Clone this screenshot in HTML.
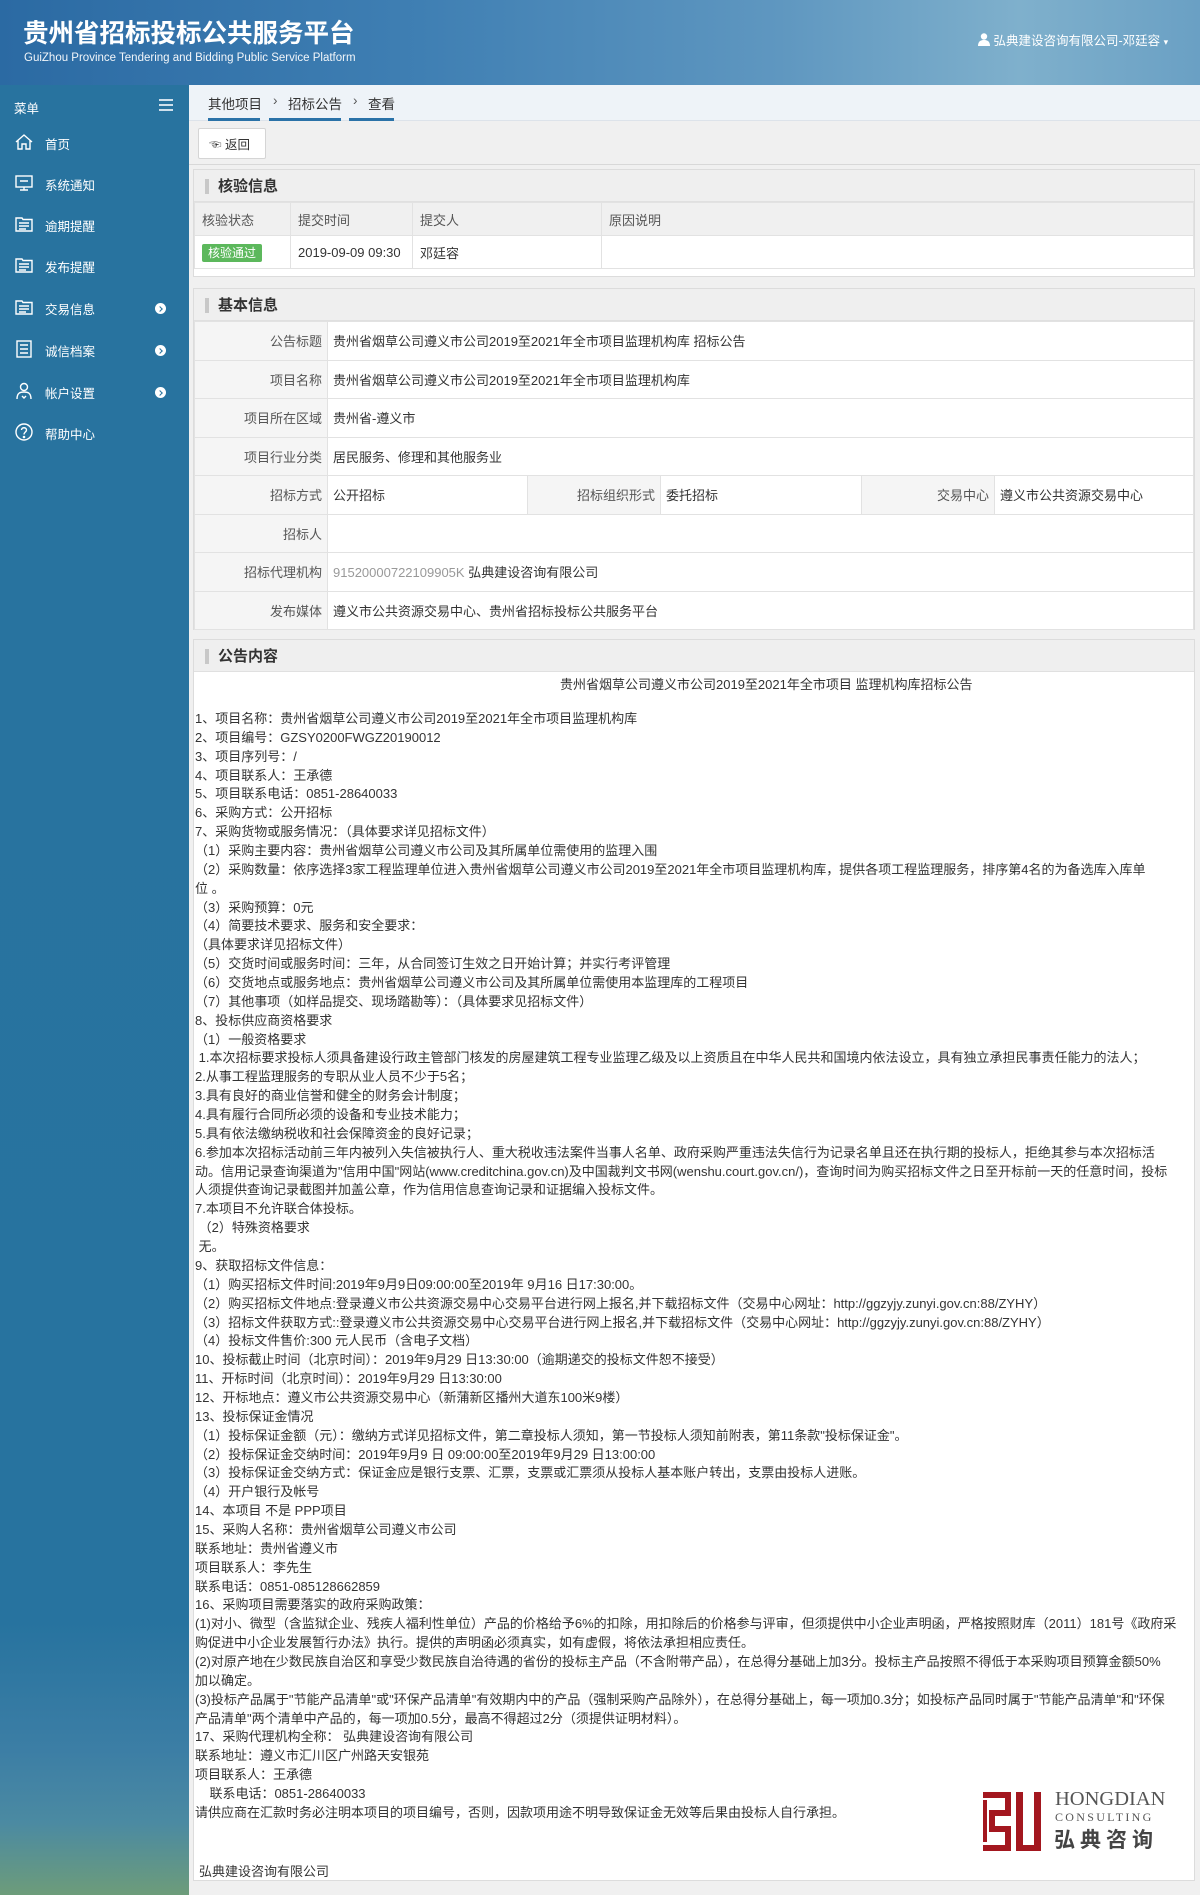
<!DOCTYPE html>
<html><head><meta charset="utf-8">
<style>
*{margin:0;padding:0;box-sizing:border-box}
body{width:1200px;height:1895px;position:relative;background:#f0f0f0;font-family:"Liberation Sans","Noto Sans CJK SC",sans-serif;color:#333;font-size:13px;overflow:hidden}
.abs{position:absolute}
#hdr{left:0;top:0;width:1200px;height:85px;background:linear-gradient(90deg,#2b6aa3 0%,#3f7fb3 35%,#5f97c0 65%,#7fb0cc 85%,#6aa0c4 100%);box-shadow:0 2px 4px rgba(0,0,0,.35)}
#hdr .t1{left:23px;top:15px;font-size:25.5px;font-weight:bold;color:#fff;font-family:"Noto Sans CJK SC",sans-serif;white-space:nowrap;line-height:34px}
#hdr .t2{left:24px;top:52px;font-size:11.5px;color:#f2f6fa;white-space:nowrap}
#hdr .user{left:978px;top:30px;color:#fff;font-size:12.5px;white-space:nowrap}
#side{left:0;top:85px;width:189px;height:1810px;background:linear-gradient(180deg,#28739f 0%,#27739f 85%,#3c7ea5 92%,#4b8aa2 96%,#6d9c7a 100%)}
.mi{position:absolute;left:0;width:189px;height:30px;color:#fff;font-size:12.5px}
.mi span{position:absolute;left:45px;top:6px}
.mi svg{position:absolute;left:14px;top:4px}
.mi .ch{position:absolute;left:155px;top:10px;width:11px;height:11px;border-radius:50%;background:#fff}
.mi .ch:after{content:"";position:absolute;left:3px;top:3.5px;width:3px;height:3px;border-right:1.5px solid #27739f;border-top:1.5px solid #27739f;transform:rotate(45deg)}
#bc{left:189px;top:85px;width:1011px;height:36px;background:#eef3f8;border-bottom:1px solid #dde3ea}
.bct{position:absolute;top:8px;font-size:13.5px;color:#333}
.bcu{position:absolute;top:33px;height:3px;background:#2a72a8}
.box{position:absolute;left:193px;width:1002px;background:#fff;border:1px solid #dcdcdc}
.bh{height:32px;background:#efefef;border-bottom:1px solid #e0e0e0;position:relative}
.bh b{position:absolute;left:24px;top:5px;font-size:15px;font-family:"Noto Sans CJK SC",sans-serif}
.bh i{position:absolute;left:11px;top:9px;width:4px;height:15px;background:#c8c8c8}
table{border-collapse:collapse}
td{border:1px solid #e2e2e2;font-size:13px}
.lab{background:#f5f5f5;text-align:right;padding-right:5px;color:#555}
.val{padding-left:5px}
#ct{position:absolute;left:195px;top:710px;width:1000px;line-height:18.86px;font-size:13px;color:#333;white-space:pre-wrap}
</style></head><body>
<div id="hdr" class="abs">
<div class="abs t1">贵州省招标投标公共服务平台</div>
<div class="abs t2">GuiZhou Province Tendering and Bidding Public Service Platform</div>
<div class="abs user"><svg width="12" height="13" viewBox="0 0 12 13" style="vertical-align:-1px"><circle cx="6" cy="3.5" r="3.2" fill="#fff"/><path d="M0 13 C0 8 3 7 6 7 C9 7 12 8 12 13Z" fill="#fff"/></svg> 弘典建设咨询有限公司-邓廷容 <span style="font-size:9px">▾</span></div>
</div>
<div id="side" class="abs">
<div class="abs" style="left:14px;top:13px;color:#fff;font-size:12.5px">菜单</div>
<div class="abs" style="left:159px;top:14px;width:14px;height:2px;background:#cfe0ec;box-shadow:0 5px 0 #cfe0ec,0 10px 0 #cfe0ec"></div>
<div class="mi" style="top:43px"><svg width="20" height="20" viewBox="0 0 20 20" fill="none" stroke="#fff" stroke-width="1.4"><path d="M2 10 L10 3 L18 10 M4 8.5 V17 H8 V12 H12 V17 H16 V8.5"/></svg><span>首页</span></div>
<div class="mi" style="top:84px"><svg width="20" height="20" viewBox="0 0 20 20" fill="none" stroke="#fff" stroke-width="1.4"><rect x="2" y="3" width="16" height="11"/><path d="M10 14 V17 M6 17 H14 M6 8 H14"/></svg><span>系统通知</span></div>
<div class="mi" style="top:125px"><svg width="20" height="20" viewBox="0 0 20 20" fill="none" stroke="#fff" stroke-width="1.4"><path d="M2 4 H8 L9 5.5 H18 V17 H2Z M5 9 H15 M5 12 H15 M5 15 H12"/></svg><span>逾期提醒</span></div>
<div class="mi" style="top:166px"><svg width="20" height="20" viewBox="0 0 20 20" fill="none" stroke="#fff" stroke-width="1.4"><path d="M2 4 H8 L9 5.5 H18 V17 H2Z M5 9 H15 M5 12 H15 M5 15 H12"/></svg><span>发布提醒</span></div>
<div class="mi" style="top:208px"><svg width="20" height="20" viewBox="0 0 20 20" fill="none" stroke="#fff" stroke-width="1.4"><path d="M2 4 H8 L9 5.5 H18 V17 H2Z M5 9 H15 M5 12 H15 M5 15 H12"/></svg><span>交易信息</span><div class="ch"></div></div>
<div class="mi" style="top:250px"><svg width="20" height="20" viewBox="0 0 20 20" fill="none" stroke="#fff" stroke-width="1.4"><rect x="3" y="2" width="14" height="16"/><path d="M6 6 H14 M6 10 H14 M6 14 H14"/></svg><span>诚信档案</span><div class="ch"></div></div>
<div class="mi" style="top:292px"><svg width="20" height="20" viewBox="0 0 20 20" fill="none" stroke="#fff" stroke-width="1.4"><circle cx="10" cy="6" r="3.5"/><path d="M3 18 C3 12 6 11 10 11 C14 11 17 12 17 18 M8 15 L10 17 L12 15"/></svg><span>帐户设置</span><div class="ch"></div></div>
<div class="mi" style="top:333px"><svg width="20" height="20" viewBox="0 0 20 20" fill="none" stroke="#fff" stroke-width="1.4"><circle cx="10" cy="10" r="8"/><path d="M7.5 8 C7.5 5 12.5 5 12.5 8 C12.5 10 10 10 10 12.5"/><circle cx="10" cy="15" r=".6" fill="#fff"/></svg><span>帮助中心</span></div>
</div>
<div id="bc" class="abs">
<div class="bct" style="left:19px">其他项目</div>
<div class="bct" style="left:84px;color:#555">›</div>
<div class="bct" style="left:99px">招标公告</div>
<div class="bct" style="left:164px;color:#555">›</div>
<div class="bct" style="left:179px">查看</div>
<div class="bcu" style="left:19px;width:52px"></div>
<div class="bcu" style="left:80px;width:72px"></div>
<div class="bcu" style="left:160px;width:45px"></div>
</div>
<div class="abs" style="left:198px;top:128px;width:68px;height:31px;background:#fff;border:1px solid #d5d5d5;border-radius:2px;font-size:12.5px;padding:5px 0 0 10px">☜ 返回</div>
<div class="abs" style="left:189px;top:164px;width:1011px;height:1px;background:#d8d8d8"></div>

<div class="box" style="top:169px;height:108px">
<div class="bh"><i></i><b>核验信息</b></div>
<table style="width:1000px">
<tr style="height:33px;background:#f0f0f0"><td style="width:96px;padding-left:7px;color:#555">核验状态</td><td style="width:122px;padding-left:7px;color:#555">提交时间</td><td style="width:189px;padding-left:7px;color:#555">提交人</td><td style="padding-left:7px;color:#555">原因说明</td></tr>
<tr style="height:33px"><td style="padding-left:7px"><span style="background:#5cb85c;color:#fff;padding:2px 6px;font-size:12px;border-radius:2px">核验通过</span></td><td style="padding-left:7px">2019-09-09 09:30</td><td style="padding-left:7px">邓廷容</td><td></td></tr>
</table>
</div>

<div class="box" style="top:288px;height:342px">
<div class="bh"><i></i><b>基本信息</b></div>
<table style="width:1000px">
<tr style="height:38.5px"><td class="lab" style="width:133px">公告标题</td><td class="val" colspan="5">贵州省烟草公司遵义市公司2019至2021年全市项目监理机构库 招标公告</td></tr>
<tr style="height:38.5px"><td class="lab">项目名称</td><td class="val" colspan="5">贵州省烟草公司遵义市公司2019至2021年全市项目监理机构库</td></tr>
<tr style="height:38.5px"><td class="lab">项目所在区域</td><td class="val" colspan="5">贵州省-遵义市</td></tr>
<tr style="height:38.5px"><td class="lab">项目行业分类</td><td class="val" colspan="5">居民服务、修理和其他服务业</td></tr>
<tr style="height:38.5px"><td class="lab">招标方式</td><td class="val" style="width:200px">公开招标</td><td class="lab" style="width:133px">招标组织形式</td><td class="val" style="width:201px">委托招标</td><td class="lab" style="width:133px">交易中心</td><td class="val">遵义市公共资源交易中心</td></tr>
<tr style="height:38.5px"><td class="lab">招标人</td><td class="val" colspan="5"></td></tr>
<tr style="height:38.5px"><td class="lab">招标代理机构</td><td class="val" colspan="5"><span style="color:#999">91520000722109905K</span> 弘典建设咨询有限公司</td></tr>
<tr style="height:38.5px"><td class="lab">发布媒体</td><td class="val" colspan="5">遵义市公共资源交易中心、贵州省招标投标公共服务平台</td></tr>
</table>
</div>

<div class="box" style="top:639px;height:1242px">
<div class="bh"><i></i><b>公告内容</b></div>
</div>
<div class="abs" style="left:560px;top:674px;font-size:13px;white-space:nowrap">贵州省烟草公司遵义市公司2019至2021年全市项目 监理机构库招标公告</div>
<div id="ct">1、项目名称：贵州省烟草公司遵义市公司2019至2021年全市项目监理机构库
2、项目编号：GZSY0200FWGZ20190012
3、项目序列号：/
4、项目联系人：王承德
5、项目联系电话：0851-28640033
6、采购方式：公开招标
7、采购货物或服务情况：（具体要求详见招标文件）
（1）采购主要内容：贵州省烟草公司遵义市公司及其所属单位需使用的监理入围
（2）采购数量：依序选择3家工程监理单位进入贵州省烟草公司遵义市公司2019至2021年全市项目监理机构库，提供各项工程监理服务，排序第4名的为备选库入库单
位 。
（3）采购预算：0元
（4）简要技术要求、服务和安全要求：
（具体要求详见招标文件）
（5）交货时间或服务时间：三年，从合同签订生效之日开始计算；并实行考评管理
（6）交货地点或服务地点：贵州省烟草公司遵义市公司及其所属单位需使用本监理库的工程项目
（7）其他事项（如样品提交、现场踏勘等）：（具体要求见招标文件）
8、投标供应商资格要求
（1）一般资格要求
 1.本次招标要求投标人须具备建设行政主管部门核发的房屋建筑工程专业监理乙级及以上资质且在中华人民共和国境内依法设立，具有独立承担民事责任能力的法人；
2.从事工程监理服务的专职从业人员不少于5名；
3.具有良好的商业信誉和健全的财务会计制度；
4.具有履行合同所必须的设备和专业技术能力；
5.具有依法缴纳税收和社会保障资金的良好记录；
6.参加本次招标活动前三年内被列入失信被执行人、重大税收违法案件当事人名单、政府采购严重违法失信行为记录名单且还在执行期的投标人，拒绝其参与本次招标活
动。信用记录查询渠道为"信用中国"网站(www.creditchina.gov.cn)及中国裁判文书网(wenshu.court.gov.cn/)，查询时间为购买招标文件之日至开标前一天的任意时间，投标
人须提供查询记录截图并加盖公章，作为信用信息查询记录和证据编入投标文件。
7.本项目不允许联合体投标。
 （2）特殊资格要求
 无。
9、获取招标文件信息：
（1）购买招标文件时间:2019年9月9日09:00:00至2019年 9月16 日17:30:00。
（2）购买招标文件地点:登录遵义市公共资源交易中心交易平台进行网上报名,并下载招标文件（交易中心网址：http://ggzyjy.zunyi.gov.cn:88/ZYHY）
（3）招标文件获取方式::登录遵义市公共资源交易中心交易平台进行网上报名,并下载招标文件（交易中心网址：http://ggzyjy.zunyi.gov.cn:88/ZYHY）
（4）投标文件售价:300 元人民币（含电子文档）
10、投标截止时间（北京时间）：2019年9月29 日13:30:00（逾期递交的投标文件恕不接受）
11、开标时间（北京时间）：2019年9月29 日13:30:00
12、开标地点：遵义市公共资源交易中心（新蒲新区播州大道东100米9楼）
13、投标保证金情况
（1）投标保证金额（元）：缴纳方式详见招标文件，第二章投标人须知，第一节投标人须知前附表，第11条款"投标保证金"。
（2）投标保证金交纳时间：2019年9月9 日 09:00:00至2019年9月29 日13:00:00
（3）投标保证金交纳方式：保证金应是银行支票、汇票，支票或汇票须从投标人基本账户转出，支票由投标人进账。
（4）开户银行及帐号
14、本项目 不是 PPP项目
15、采购人名称：贵州省烟草公司遵义市公司
联系地址：贵州省遵义市
项目联系人：李先生
联系电话：0851-085128662859
16、采购项目需要落实的政府采购政策：
(1)对小、微型（含监狱企业、残疾人福利性单位）产品的价格给予6%的扣除，用扣除后的价格参与评审，但须提供中小企业声明函，严格按照财库（2011）181号《政府采
购促进中小企业发展暂行办法》执行。提供的声明函必须真实，如有虚假，将依法承担相应责任。
(2)对原产地在少数民族自治区和享受少数民族自治待遇的省份的投标主产品（不含附带产品），在总得分基础上加3分。投标主产品按照不得低于本采购项目预算金额50%
加以确定。
(3)投标产品属于"节能产品清单"或"环保产品清单"有效期内中的产品（强制采购产品除外），在总得分基础上，每一项加0.3分；如投标产品同时属于"节能产品清单"和"环保
产品清单"两个清单中产品的，每一项加0.5分，最高不得超过2分（须提供证明材料）。
17、采购代理机构全称： 弘典建设咨询有限公司
联系地址：遵义市汇川区广州路天安银苑
项目联系人：王承德
    联系电话：0851-28640033
请供应商在汇款时务必注明本项目的项目编号，否则，因款项用途不明导致保证金无效等后果由投标人自行承担。</div>
<div class="abs" style="left:199px;top:1861px;font-size:13px">弘典建设咨询有限公司</div>
<svg class="abs" style="left:983px;top:1792px" width="58" height="59" viewBox="0 0 58 59">
<g fill="#a3171f">
<rect x="0" y="0" width="28" height="6"/>
<rect x="22" y="0" width="6" height="24"/>
<rect x="6" y="18" width="22" height="6"/>
<rect x="6" y="18" width="6" height="22"/>
<rect x="6" y="34" width="22" height="6"/>
<rect x="22" y="34" width="6" height="25"/>
<rect x="0" y="53" width="28" height="6"/>
<rect x="0" y="8" width="4" height="42"/>
<rect x="33" y="0" width="7" height="53"/>
<rect x="51" y="0" width="7" height="59"/>
<rect x="33" y="53" width="25" height="6"/>
</g></svg>
<div class="abs" style="left:1055px;top:1788px;font-family:'Liberation Serif',serif;font-size:20.5px;color:#555;white-space:nowrap">HONGDIAN</div>
<div class="abs" style="left:1055px;top:1810px;font-family:'Liberation Serif',serif;font-size:12px;letter-spacing:2.3px;color:#555;white-space:nowrap">CONSULTING</div>
<div class="abs" style="left:1054px;top:1826px;font-family:'Noto Sans CJK SC',sans-serif;font-size:21px;font-weight:bold;letter-spacing:5px;color:#444;white-space:nowrap;line-height:26px">弘典咨询</div>
</body></html>
